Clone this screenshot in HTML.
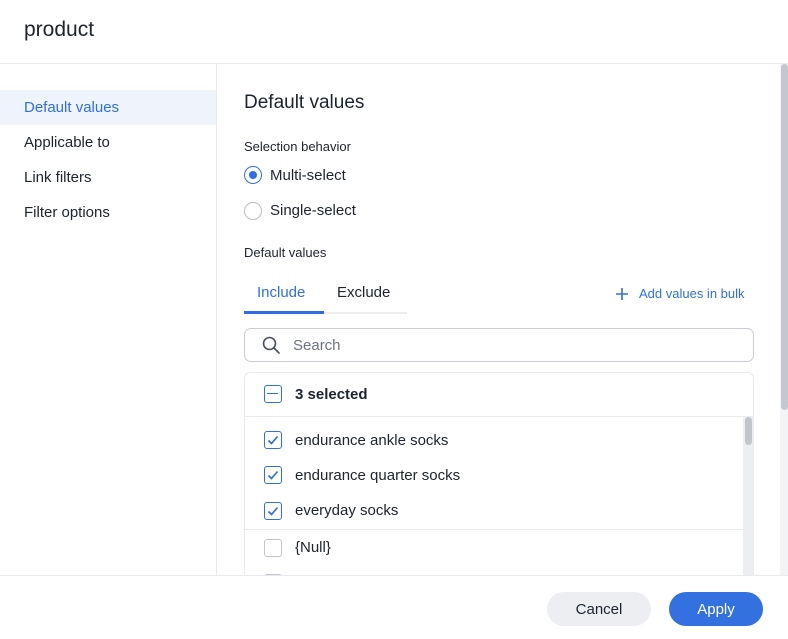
<!DOCTYPE html>
<html><head><style>
*{box-sizing:border-box;margin:0;padding:0}
body{width:788px;height:639px;overflow:hidden;background:#fff;font-family:"Liberation Sans",sans-serif;color:#1d232f;position:relative}
.a{position:absolute;white-space:nowrap}
.cb{position:absolute;width:18px;height:18px;border:1.5px solid #c0c5cf;border-radius:3px;background:#fff}
.cb.on{border-color:#2f6fe6}
.cb svg{position:absolute;left:-1.5px;top:-1.5px}
</style></head><body>
<div class="a" style="left:24px;top:18px;font-size:21px">product</div>
<div class="a" style="left:0;top:63px;width:788px;height:1px;background:#e8eaee"></div>
<div class="a" style="left:216px;top:64px;width:1px;height:511px;background:#e8eaee"></div>
<div class="a" style="left:0;top:90px;width:216px;height:35px;background:#eef3fc"></div>
<div class="a" style="left:24px;top:99px;font-size:15px;color:#2f6fe6">Default values</div>
<div class="a" style="left:24px;top:134px;font-size:15px">Applicable to</div>
<div class="a" style="left:24px;top:169px;font-size:15px">Link filters</div>
<div class="a" style="left:24px;top:204px;font-size:15px">Filter options</div>
<div class="a" style="left:780px;top:64px;width:8px;height:511px;background:#f3f4f6"></div>
<div class="a" style="left:781px;top:64px;width:7px;height:346px;background:#c4c7cd;border-radius:4px"></div>

<div class="a" style="left:244px;top:92px;font-size:19px">Default values</div>
<div class="a" style="left:244px;top:139px;font-size:13px">Selection behavior</div>
<div class="a" style="left:244px;top:166px;width:18px;height:18px;border:1.5px solid #2f6fe6;border-radius:50%"><div style="position:absolute;left:3.5px;top:3.5px;width:8px;height:8px;border-radius:50%;background:#2f6fe6"></div></div>
<div class="a" style="left:270px;top:167px;font-size:15px">Multi-select</div>
<div class="a" style="left:244px;top:202px;width:18px;height:18px;border:1.5px solid #b8bdc7;border-radius:50%"></div>
<div class="a" style="left:270px;top:202px;font-size:15px">Single-select</div>
<div class="a" style="left:244px;top:245px;font-size:13px">Default values</div>
<div class="a" style="left:257px;top:284px;font-size:15px;color:#2f6fe6">Include</div>
<div class="a" style="left:337px;top:284px;font-size:15px">Exclude</div>
<div class="a" style="left:244px;top:312px;width:163px;height:2px;background:#eceef2"></div>
<div class="a" style="left:244px;top:311px;width:80px;height:3px;background:#2f6fe6"></div>
<svg class="a" style="left:615px;top:287px" width="14" height="14" viewBox="0 0 14 14"><path d="M7 1v12M1 7h12" stroke="#2f6fe6" stroke-width="1.6"/></svg>
<div class="a" style="left:639px;top:286px;font-size:13px;color:#2f6fe6">Add values in bulk</div>

<div class="a" style="left:244px;top:328px;width:510px;height:34px;border:1px solid #c8ccd4;border-radius:7px"></div>
<svg class="a" style="left:261px;top:335px" width="20" height="20" viewBox="0 0 20 20"><circle cx="8.5" cy="8.5" r="6" fill="none" stroke="#4a505c" stroke-width="1.6"/><path d="M13 13l5 5" stroke="#4a505c" stroke-width="1.6" stroke-linecap="round"/></svg>
<div class="a" style="left:293px;top:337px;font-size:15px;color:#6b7280">Search</div>

<div class="a" style="left:244px;top:372px;width:510px;height:220px;border:1px solid #e8eaee;border-radius:6px"></div>
<div class="a" style="left:245px;top:416px;width:508px;height:1px;background:#e8eaee"></div>
<div class="cb on" style="left:264px;top:385px"><div style="position:absolute;left:2px;top:6.5px;width:11px;height:1.8px;background:#2f6fe6"></div></div>
<div class="a" style="left:295px;top:386px;font-size:15px;font-weight:bold">3 selected</div>
<svg width="0" height="0" style="position:absolute"><defs><symbol id="ck" viewBox="0 0 18 18"><path d="M4.5 9.5l3 3L13.5 5.5" fill="none" stroke="#2f6fe6" stroke-width="1.7"/></symbol></defs></svg>
<div class="cb on" style="left:264px;top:431px"><svg width="18" height="18" viewBox="0 0 18 18"><use href="#ck"/></svg></div>
<div class="a" style="left:295px;top:432px;font-size:15px">endurance ankle socks</div>
<div class="cb on" style="left:264px;top:466px"><svg width="18" height="18" viewBox="0 0 18 18"><use href="#ck"/></svg></div>
<div class="a" style="left:295px;top:467px;font-size:15px">endurance quarter socks</div>
<div class="cb on" style="left:264px;top:502px"><svg width="18" height="18" viewBox="0 0 18 18"><use href="#ck"/></svg></div>
<div class="a" style="left:295px;top:502px;font-size:15px">everyday socks</div>
<div class="a" style="left:245px;top:529px;width:498px;height:1px;background:#e8eaee"></div>
<div class="cb" style="left:264px;top:539px"></div>
<div class="a" style="left:295px;top:539px;font-size:15px">{Null}</div>
<div class="cb" style="left:264px;top:574px"></div>
<div class="a" style="left:743px;top:417px;width:10px;height:158px;background:#eceef1"></div>
<div class="a" style="left:745px;top:417px;width:7px;height:28px;background:#c2c5cb;border-radius:4px"></div>

<div class="a" style="left:0;top:575px;width:788px;height:64px;background:#fff;border-top:1px solid #e8eaee"></div>
<div class="a" style="left:547px;top:592px;width:104px;height:34px;border-radius:17px;background:#eceef2;font-size:15px;text-align:center;line-height:35px">Cancel</div>
<div class="a" style="left:669px;top:592px;width:94px;height:34px;border-radius:17px;background:#3370e0;color:#fff;font-size:15px;text-align:center;line-height:35px">Apply</div>
</body></html>
